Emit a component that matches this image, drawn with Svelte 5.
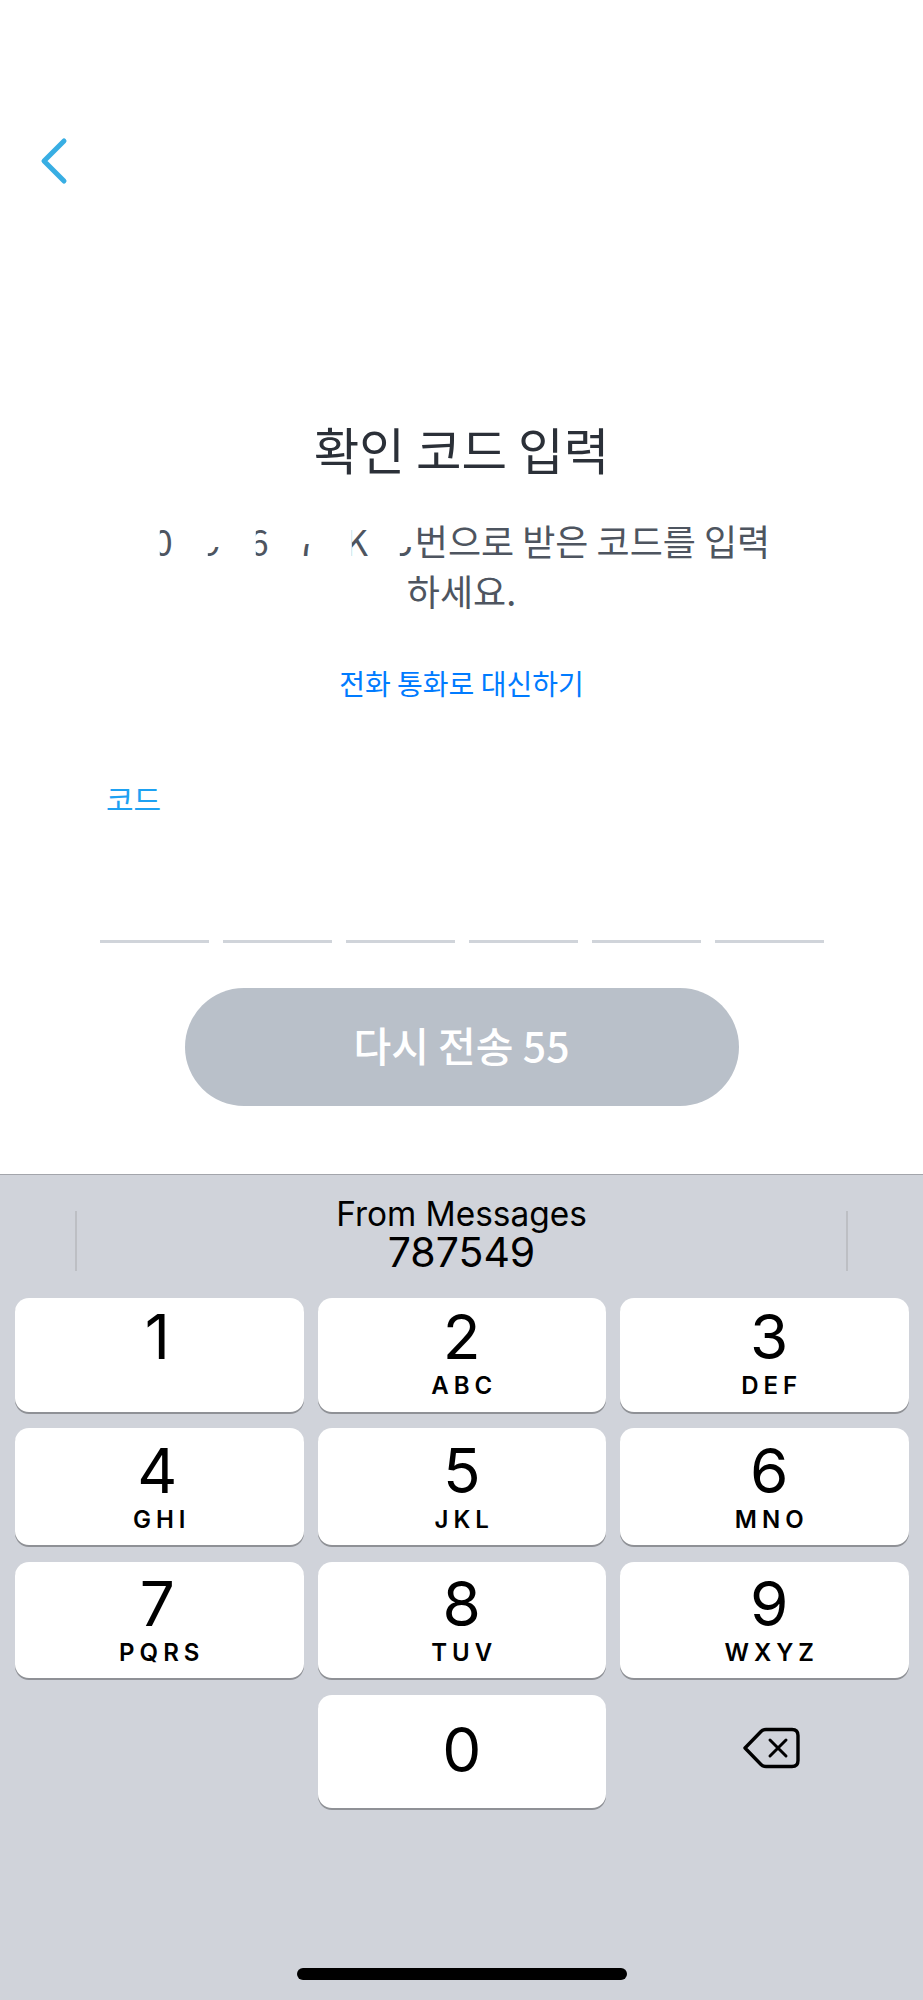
<script>
  const keys = [
    { d: '1', l: '' },
    { d: '2', l: 'ABC' },
    { d: '3', l: 'DEF' },
    { d: '4', l: 'GHI' },
    { d: '5', l: 'JKL' },
    { d: '6', l: 'MNO' },
    { d: '7', l: 'PQRS' },
    { d: '8', l: 'TUV' },
    { d: '9', l: 'WXYZ' }
  ];
  // 가려진 전화번호 조각
  const scraps = ['0', '9', '6', '7', 'K', '5'];
</script>

<div class="screen">
  <section class="content">
    <button class="back" aria-label="back">
      <svg width="30" height="48" viewBox="0 0 30 48">
        <path d="M25 4 L5 24 L25 44" fill="none" stroke="#38aee3" stroke-width="5" stroke-linecap="round" stroke-linejoin="round" />
      </svg>
    </button>

    <h1>확인 코드 입력</h1>
    <p class="desc">
      <span class="scraps">
        {#each scraps as s}
          <span class="scrap">{s}</span>
        {/each}
      </span>번으로 받은 코드를 입력<br />하세요.
    </p>
    <div class="link">전화 통화로 대신하기</div>
    <div class="label">코드</div>
    <div class="code">
      {#each Array(6) as _}
        <span class="slot"></span>
      {/each}
    </div>
    <div class="resend">다시 전송 55</div>
  </section>

  <section class="keyboard">
    <div class="suggest">
      <span class="sep"></span>
      <div class="otp">
        <div class="from">From Messages</div>
        <div class="num">787549</div>
      </div>
      <span class="sep"></span>
    </div>
    <div class="keys">
      {#each keys as k}
        <div class="key">
          <span class="digit">{k.d}</span>
          <span class="letters">{k.l}</span>
        </div>
      {/each}
      <div class="blank"></div>
      <div class="key zero"><span class="digit">0</span></div>
      <div class="del">
        <svg width="58" height="44" viewBox="0 0 58 44">
          <path d="M3 22 L19 5.5 Q21 3.5 24 3.5 L50 3.5 Q56 3.5 56 9.5 L56 34.5 Q56 40.5 50 40.5 L24 40.5 Q21 40.5 19 38.5 Z" fill="none" stroke="#000" stroke-width="3.4" stroke-linejoin="round" />
          <path d="M28 14 L44 30 M44 14 L28 30" fill="none" stroke="#000" stroke-width="3" stroke-linecap="round" />
        </svg>
      </div>
    </div>
    <div class="home"></div>
  </section>
</div>

<style>
  :global(body) {
    margin: 0;
    background: #fff;
  }
  .screen {
    width: 923px;
    height: 2000px;
    display: flex;
    flex-direction: column;
    font-family: "Noto Sans CJK KR", "Noto Sans", sans-serif;
    overflow: hidden;
  }

  /* 상단 */
  .content {
    height: 1174px;
    box-sizing: border-box;
    padding-top: 136px;
    display: flex;
    flex-direction: column;
    align-items: center;
  }
  .back {
    align-self: flex-start;
    margin-left: 39px;
    padding: 0;
    border: 0;
    background: none;
    height: 52px;
    display: block;
  }
  h1 {
    margin: 230px 0 0;
    height: 62px;
    font-size: 49.5px;
    line-height: 62px;
    font-weight: 400;
    color: #2b3038;
  }
  .desc {
    margin: 35px 0 0;
    font-size: 36px;
    line-height: 50px;
    color: #4e5560;
    text-align: center;
    width: 640px;
  }
  .scraps {
    display: inline-flex;
    width: 262px;
  }
  .scrap {
    flex: none;
    width: 48px;
    text-align: left;
    clip-path: inset(64% 0 0 7px);
  }
  .scrap:nth-child(1),
  .scrap:nth-child(3),
  .scrap:nth-child(5) {
    clip-path: inset(30% 0 0 7px);
  }
  .scrap:nth-child(4) {
    clip-path: inset(58% 0 0 2px);
  }
  .link {
    margin-top: 47px;
    font-size: 28px;
    line-height: 42px;
    color: #007bff;
  }
  .label {
    align-self: flex-start;
    margin: 74px 0 0 106px;
    font-size: 30px;
    line-height: 40px;
    color: #1da1f2;
  }
  .code {
    margin-top: 122px;
    width: 724px;
    display: flex;
    justify-content: space-between;
  }
  .slot {
    width: 109px;
    height: 3px;
    background: #d0d4da;
  }
  .resend {
    margin-top: 45px;
    width: 554px;
    height: 118px;
    border-radius: 59px;
    background: #b9c0c9;
    color: #fff;
    font-size: 41px;
    font-weight: 500;
    line-height: 112px;
    text-align: center;
  }

  /* 키보드 */
  .keyboard {
    flex: 1;
    background: #d0d3da;
    border-top: 1px solid #a3a5ab;
    display: flex;
    flex-direction: column;
    font-family: "Inter", "Liberation Sans", sans-serif;
    color: #000;
  }
  .suggest {
    height: 123px;
    padding: 0 75px;
    display: flex;
    align-items: flex-start;
    justify-content: space-between;
  }
  .sep {
    width: 2px;
    height: 60px;
    margin-top: 36px;
    background: #bdbfc4;
  }
  .otp {
    text-align: center;
    padding-top: 21px;
  }
  .from {
    font-size: 33.4px;
    line-height: 36px;
  }
  .num {
    font-size: 41px;
    line-height: 40px;
  }
  .keys {
    padding: 0 15px;
    display: grid;
    grid-template-columns: repeat(3, 288.5px);
    grid-template-rows: 130px 134px 133px 115px;
    column-gap: 14px;
  }
  .key {
    height: 114px;
    background: #fff;
    border-radius: 14px;
    box-shadow: 0 2px 0 #8f9196;
    display: flex;
    flex-direction: column;
    align-items: center;
  }
  .key:nth-child(3n) {
    padding-left: 10px;
    box-sizing: border-box;
  }
  .key:nth-child(3n + 1) .digit {
    margin-right: 4px;
  }
  .digit {
    font-size: 62px;
    line-height: 76px;
    margin-top: 1px;
  }
  .letters {
    font-size: 24px;
    font-weight: 600;
    letter-spacing: 5px;
    line-height: 22px;
    margin-right: -5px;
  }
  /* 행 간격이 조금씩 달라서 글자 위치 보정 */
  .key:nth-child(n + 4):nth-child(-n + 6) {
    height: 117px;
  }
  .key:nth-child(n + 4):nth-child(-n + 6) .digit {
    margin-top: 5px;
  }
  .key:nth-child(n + 7):nth-child(-n + 9) {
    height: 116px;
  }
  .key:nth-child(n + 7):nth-child(-n + 9) .digit {
    margin-top: 4px;
  }
  .zero {
    height: 113px;
    justify-content: center;
  }
  .zero .digit {
    margin-top: -4px;
  }
  .del {
    display: flex;
    justify-content: center;
    align-items: center;
    height: 113px;
    padding: 0 0 8px 14px;
    box-sizing: border-box;
  }
  .home {
    margin: auto auto 20px;
    width: 330px;
    height: 12px;
    border-radius: 6px;
    background: #000;
  }
</style>
